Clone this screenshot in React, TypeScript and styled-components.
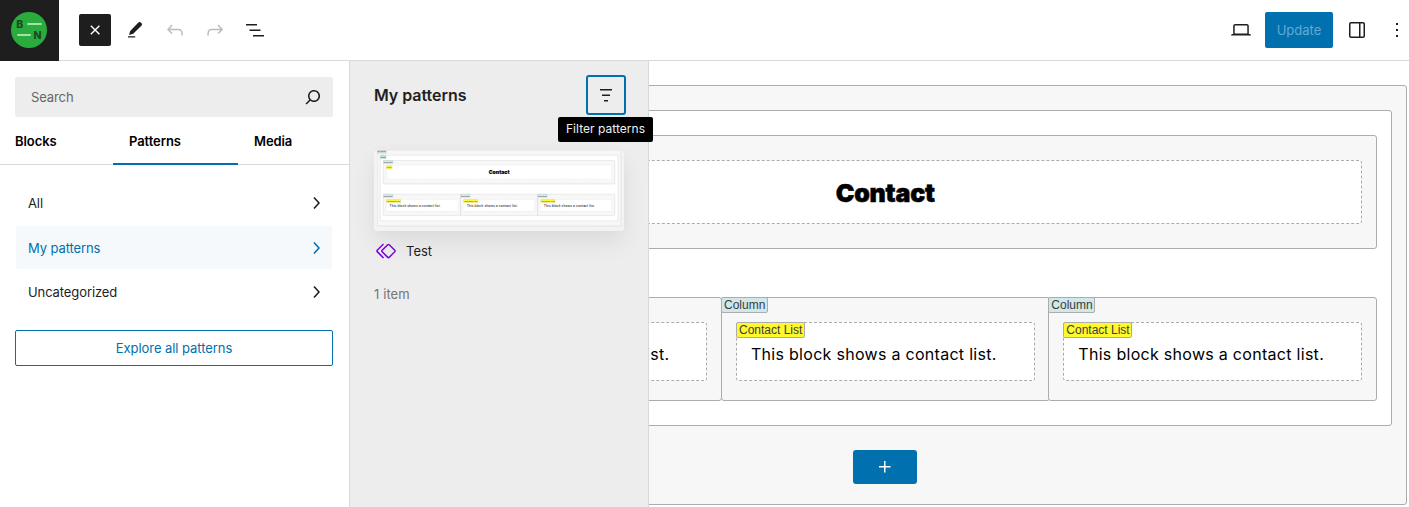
import React from "react";
import styled, { createGlobalStyle, css } from "styled-components";

const blue = "#0070af";
const ink = "#1e1e1e";
const uiFont = `Inter, "Liberation Sans", sans-serif`;

const GlobalStyle = createGlobalStyle`
  *, *::before, *::after { box-sizing: border-box; }
  html, body { margin: 0; padding: 0; overflow: hidden; background: #fff; }
  button { font: inherit; color: inherit; margin: 0; padding: 0; border: 0; background: none; }
  svg { display: block; flex: none; }
`;

const Editor = styled.div`
  display: flex;
  flex-direction: column;
  width: 100%;
  height: 100vh;
  overflow: hidden;
  background: #fff;
  color: ${ink};
  font: 400 13px/20px ${uiFont};
`;

const TopBar = styled.header`
  display: flex;
  align-items: flex-start;
  flex: none;
  height: 61px;
  border-bottom: 1px solid #d9d9d9;
`;

const SiteHub = styled.div`
  display: flex;
  align-items: center;
  justify-content: center;
  width: 59px;
  height: 61px;
  padding: 0 1px 1px 0;
  background: ${ink};
`;

const ToolGroup = styled.div`
  display: flex;
  align-items: center;
  height: 60px;
  padding-left: 20px;
  gap: 8px;
`;

const ToolButton = styled.button<{ $dark?: boolean; $dim?: boolean }>`
  display: flex;
  align-items: center;
  justify-content: center;
  width: 32px;
  height: 32px;
  border-radius: 2px;
  color: ${(p) => (p.$dark ? "#fff" : p.$dim ? "#bcbcbc" : ink)};
  background: ${(p) => (p.$dark ? ink : "transparent")};
`;

const ActionGroup = styled(ToolGroup)`
  margin-left: auto;
  margin-right: -4px;
`;

const UpdateButton = styled.button`
  width: 68px;
  height: 36px;
  border-radius: 2px;
  background: ${blue};
  color: #66a9cf;
`;

const Body = styled.div`
  display: flex;
  flex: 1;
  min-height: 0;
`;

const Inserter = styled.aside`
  display: flex;
  flex-direction: column;
  flex: none;
  width: 350px;
  border-right: 1px solid #d9d9d9;
`;

const SearchBox = styled.div`
  display: flex;
  align-items: center;
  justify-content: space-between;
  height: 40px;
  margin: 16px 16px 0 15px;
  padding: 0 8px 0 16px;
  border-radius: 2px;
  background: #ededed;
  color: #666;
  letter-spacing: -0.1px;
  svg { color: ${ink}; }
`;

const Tabs = styled.nav`
  display: flex;
  height: 48px;
  border-bottom: 1px solid #d9d9d9;
`;

const Tab = styled.button<{ $width: number; $pad: number; $active?: boolean }>`
  width: ${(p) => p.$width}px;
  height: 48px;
  padding-left: ${(p) => p.$pad}px;
  text-align: left;
  font-weight: 600;
  letter-spacing: -0.08px;
  color: #000;
  ${(p) => p.$active && css`box-shadow: inset 0 -2px ${blue};`}
`;

const Categories = styled.div`
  display: flex;
  flex-direction: column;
  gap: 1px;
  padding: 16.3px 17px 0 16px;
`;

const Category = styled.button<{ $active?: boolean }>`
  display: flex;
  align-items: center;
  justify-content: space-between;
  height: 43.5px;
  padding: 0 4px 0 12px;
  border-radius: 2px;
  letter-spacing: -0.1px;
  color: ${(p) => (p.$active ? blue : ink)};
  background: ${(p) => (p.$active ? "#f5f9fc" : "transparent")};
`;

const ExploreButton = styled.button`
  height: 36px;
  margin: 16.2px 16px 0 15px;
  border: 1px solid ${blue};
  border-radius: 2px;
  color: ${blue};
  letter-spacing: -0.06px;
`;

const PatternPanel = styled.section`
  flex: none;
  width: 299px;
  padding: 14px 24px 0;
  border-right: 1px solid #d9d9d9;
  background: #ededed;
`;

const PanelHeader = styled.div`
  display: flex;
  align-items: center;
  justify-content: space-between;
  height: 40px;
  margin-right: -2px;
`;

const PanelTitle = styled.h2`
  margin: 0;
  font-size: 16px;
  font-weight: 600;
  letter-spacing: -0.04px;
`;

const FilterButton = styled.button`
  position: relative;
  display: flex;
  align-items: center;
  justify-content: center;
  width: 40px;
  height: 40px;
  border: 2px solid ${blue};
  border-radius: 3px;
`;

const Tooltip = styled.span`
  position: absolute;
  z-index: 2;
  top: 40px;
  left: -30px;
  width: 95px;
  height: 25px;
  border-radius: 2px;
  background: #000;
  color: #f0f0f0;
  font-size: 12px;
  line-height: 24px;
  letter-spacing: 0.03px;
  text-align: center;
  white-space: nowrap;
`;

const PatternCard = styled.div`
  width: 250px;
  height: 81px;
  margin-top: 35px;
  padding-left: 3px;
  border-radius: 3px;
  background: #f3f3f3;
  box-shadow: 0 12px 24px rgba(0, 0, 0, 0.07), 0 0 12px rgba(0, 0, 0, 0.02);
`;

const Preview = styled.div`
  width: 1174px;
  transform: scale(0.208);
  transform-origin: 0 0;
`;

const PatternName = styled.div`
  display: flex;
  align-items: center;
  height: 24px;
  margin-top: 8px;
  gap: 8px;
  svg { color: #7a00df; }
`;

const ItemCount = styled.p`
  margin: 21px 0 0;
  color: #757575;
  letter-spacing: 0.1px;
`;

const Canvas = styled.main`
  display: flex;
  justify-content: flex-end;
  flex: 1;
  min-width: 0;
  padding: 24px 2px 0 0;
  overflow: hidden;
`;

const CanvasPage = styled.div`
  flex: none;
  width: 1043.4px;
`;

const Box = styled.div<{ $fill?: string; $dashed?: boolean }>`
  position: relative;
  padding: 24px 14px;
  border: 1px ${(p) => (p.$dashed ? "dashed" : "solid")} #acacac;
  border-radius: 3px;
  background: ${(p) => p.$fill || "#fff"};
`;

const TextBox = styled(Box)<{ $height: number; $center?: boolean }>`
  display: flex;
  align-items: center;
  justify-content: ${(p) => (p.$center ? "center" : "flex-start")};
  height: ${(p) => p.$height}px;
  padding: ${(p) => (p.$center ? "2px 15px 0" : "5px 14px 0")};
`;

const Label = styled.span<{ $fill: string }>`
  position: absolute;
  top: -1px;
  left: -1px;
  padding: 0 1.4px 0 2px;
  height: 16px;
  border: 1px solid #acacac;
  border-radius: 2px;
  background: ${(p) => p.$fill};
  color: #3c3c3c;
  font: 12px/14px "Liberation Sans", Arial, sans-serif;
  white-space: nowrap;
`;

const Columns = styled.div`
  display: flex;
  margin-top: 48px;
`;

const Column = styled(Box)`
  flex: 1 1 0;
  height: 104px;
  & + & { margin-left: -1.3px; }
`;

const Heading = styled.h1`
  margin: 0;
  color: #000;
  font: 900 25px/30px ${uiFont};
  letter-spacing: -0.2px;
  -webkit-text-stroke: 0.5px #000;
`;

const Message = styled.p`
  margin: 0;
  color: #000;
  font: 400 16px/24px ${uiFont};
  letter-spacing: 0.29px;
  white-space: nowrap;
`;

const AddBlock = styled.button`
  display: flex;
  align-items: center;
  justify-content: center;
  width: 64px;
  height: 34px;
  margin: 24px auto -4px;
  border-radius: 3px;
  background: ${blue};
  color: #fff;
`;

const grey = "#f7f7f7";
const teal = "#d0e8ea";
const yellow = "#fff82e";

/* While editing, the outer labels sit behind the inserter, so only those of the later columns are rendered. */
function ContactSection({ editing }: { editing?: boolean }) {
  return (
    <Box $fill={grey}>
      {!editing && <Label $fill="#dcdcdc">Section</Label>}
      <Box>
        {!editing && <Label $fill="#b4e6d2">Row</Label>}
        <Box $fill={grey}>
          {!editing && <Label $fill={teal}>Column</Label>}
          <TextBox $dashed $center $height={64}>
            {!editing && <Label $fill={yellow}>Title</Label>}
            <Heading>Contact</Heading>
          </TextBox>
        </Box>
        <Columns>
          {[0, 1, 2].map((n) => (
            <Column $fill={grey} key={n}>
              {(!editing || n > 0) && <Label $fill={teal}>Column</Label>}
              <TextBox $dashed $height={59}>
                {(!editing || n > 0) && <Label $fill={yellow}>Contact List</Label>}
                <Message>This block shows a contact list.</Message>
              </TextBox>
            </Column>
          ))}
        </Columns>
      </Box>
      {editing && (
        <AddBlock aria-label="Add block">
          <Icon d="M11 12.5V17.5H12.5V12.5H17.5V11H12.5V6H11V11H6V12.5H11Z" />
        </AddBlock>
      )}
    </Box>
  );
}

function Icon({ d }: { d: string }) {
  return (
    <svg width="24" height="24" viewBox="0 0 24 24" fill="currentColor">
      <path d={d} />
    </svg>
  );
}

const icons = {
  undo: "M18.3 11.7c-.6-.6-1.4-.9-2.3-.9H6.7l2.9-3.3-1.1-1-4.5 5L8.5 16l1-1-2.7-2.7H16c.5 0 .9.2 1.3.5 1 1 1 3.4 1 4.5v.3h1.5v-.2c0-1.5 0-4.3-1.5-5.7z",
  redo: "M15.6 6.5l-1.1 1 2.9 3.3H8c-.9 0-1.7.3-2.3.9-1.4 1.5-1.4 4.2-1.4 5.6v.2h1.5v-.3c0-1.1 0-3.5 1-4.5.3-.3.7-.5 1.3-.5h9.2L14.5 15l1.1 1.1 4.6-4.6-4.6-5z",
  list: "M3 6h11v1.5H3V6Zm3.5 5.5h11V13h-11v-1.5ZM21 17H10v1.5h11V17Z",
  search: "M13 5c-3.3 0-6 2.7-6 6 0 1.4.5 2.7 1.3 3.7l-3.8 3.8 1.1 1.1 3.8-3.8c1 .8 2.3 1.3 3.7 1.3 3.3 0 6-2.7 6-6S16.3 5 13 5zm0 10.5c-2.5 0-4.5-2-4.5-4.5s2-4.5 4.5-4.5 4.5 2 4.5 4.5-2 4.5-4.5 4.5z",
  chevron: "M10.6 6L9.4 7l4.6 5-4.6 5 1.2 1 5.4-6z",
  filter: "M6 6v1.5h12V6H6Zm2 5.5h8V13H8v-1.5Zm2 5.5h4v1.5h-4V17Z",
  desktop: "M20.5 16h-.7V8c0-1.1-.9-2-2-2H6.2c-1.1 0-2 .9-2 2v8h-.7c-.8 0-1.5.7-1.5 1.5h20c0-.8-.7-1.5-1.5-1.5zM5.7 8c0-.3.2-.5.5-.5h11.6c.3 0 .5.2.5.5v7.6H5.7V8z",
  sidebar: "M18 4H6c-1.1 0-2 .9-2 2v12c0 1.1.9 2 2 2h12c1.1 0 2-.9 2-2V6c0-1.1-.9-2-2-2zm-4 14.5H6c-.3 0-.5-.2-.5-.5V6c0-.3.2-.5.5-.5h8v13zm4.5-.5c0 .3-.2.5-.5.5h-2.5v-13H18c.3 0 .5.2.5.5v12z",
  more: "M13 19h-2v-2h2v2zm0-6h-2v-2h2v2zm0-6h-2V5h2v2z",
  symbol: "M21.3 10.8l-5.6-5.6c-.7-.7-1.8-.7-2.5 0l-5.6 5.6c-.7.7-.7 1.8 0 2.5l5.6 5.6c.3.3.8.5 1.2.5s.9-.2 1.2-.5l5.6-5.6c.8-.7.8-1.9.1-2.5zm-1 1.4l-5.6 5.6c-.1.1-.3.1-.4 0l-5.6-5.6c-.1-.1-.1-.3 0-.4l5.6-5.6s.1-.1.2-.1.1 0 .2.1l5.6 5.6c.1.1.1.3 0 .4zm-16.6-.4L10 5.5l-1-1-6.3 6.3c-.7.7-.7 1.8 0 2.5L9 19.5l1.1-1.1-6.3-6.3c-.2 0-.2-.2-.1-.3z",
};

function CloseIcon() {
  return (
    <svg width="24" height="24" viewBox="0 0 24 24" fill="none" stroke="currentColor" strokeWidth="1.4">
      <path d="M7.8 7.8l8.6 8.4M16.4 7.8l-8.6 8.4" />
    </svg>
  );
}

function EditIcon() {
  return (
    <svg width="24" height="24" viewBox="0 0 24 24" fill="currentColor">
      <path d="M18.6 5.3l-1-.9c-.7-.6-1.5-.6-2.2.1L7.2 12.9 6 17l4.2-1.3 8.4-8.2c.6-.7.6-1.5 0-2.2zM5 18.2h7.2v1.4H5z" />
    </svg>
  );
}

function SiteLogo() {
  return (
    <svg width="36" height="36" viewBox="0 0 36 36">
      <circle cx="18" cy="18" r="18" fill="#2aab3e" />
      <g fill="#1b4a24" fontFamily="Inter, sans-serif" fontWeight="800" fontSize="10.5">
        <text x="5.3" y="15.8">B</text>
        <text x="22.6" y="27">N</text>
      </g>
      <path d="M17 12h13M7 23h12" stroke="#a5e0a5" strokeWidth="1.8" strokeLinecap="round" />
    </svg>
  );
}

export default function App() {
  return (
    <>
      <GlobalStyle />
      <Editor>
        <TopBar>
          <SiteHub><SiteLogo /></SiteHub>
          <ToolGroup>
            <ToolButton $dark><CloseIcon /></ToolButton>
            <ToolButton><EditIcon /></ToolButton>
            <ToolButton $dim><Icon d={icons.undo} /></ToolButton>
            <ToolButton $dim><Icon d={icons.redo} /></ToolButton>
            <ToolButton><Icon d={icons.list} /></ToolButton>
          </ToolGroup>
          <ActionGroup>
            <ToolButton><Icon d={icons.desktop} /></ToolButton>
            <UpdateButton>Update</UpdateButton>
            <ToolButton><Icon d={icons.sidebar} /></ToolButton>
            <ToolButton><Icon d={icons.more} /></ToolButton>
          </ActionGroup>
        </TopBar>
        <Body>
          <Inserter>
            <SearchBox>Search<Icon d={icons.search} /></SearchBox>
            <Tabs>
              <Tab $width={113} $pad={15}>Blocks</Tab>
              <Tab $width={125} $pad={16} $active>Patterns</Tab>
              <Tab $width={111} $pad={16}>Media</Tab>
            </Tabs>
            <Categories>
              <Category>All<Icon d={icons.chevron} /></Category>
              <Category $active>My patterns<Icon d={icons.chevron} /></Category>
              <Category>Uncategorized<Icon d={icons.chevron} /></Category>
            </Categories>
            <ExploreButton>Explore all patterns</ExploreButton>
          </Inserter>
          <PatternPanel>
            <PanelHeader>
              <PanelTitle>My patterns</PanelTitle>
              <FilterButton>
                <Icon d={icons.filter} />
                <Tooltip>Filter patterns</Tooltip>
              </FilterButton>
            </PanelHeader>
            <PatternCard>
              <Preview><ContactSection /></Preview>
            </PatternCard>
            <PatternName><Icon d={icons.symbol} />Test</PatternName>
            <ItemCount>1 item</ItemCount>
          </PatternPanel>
          <Canvas>
            <CanvasPage><ContactSection editing /></CanvasPage>
          </Canvas>
        </Body>
      </Editor>
    </>
  );
}
